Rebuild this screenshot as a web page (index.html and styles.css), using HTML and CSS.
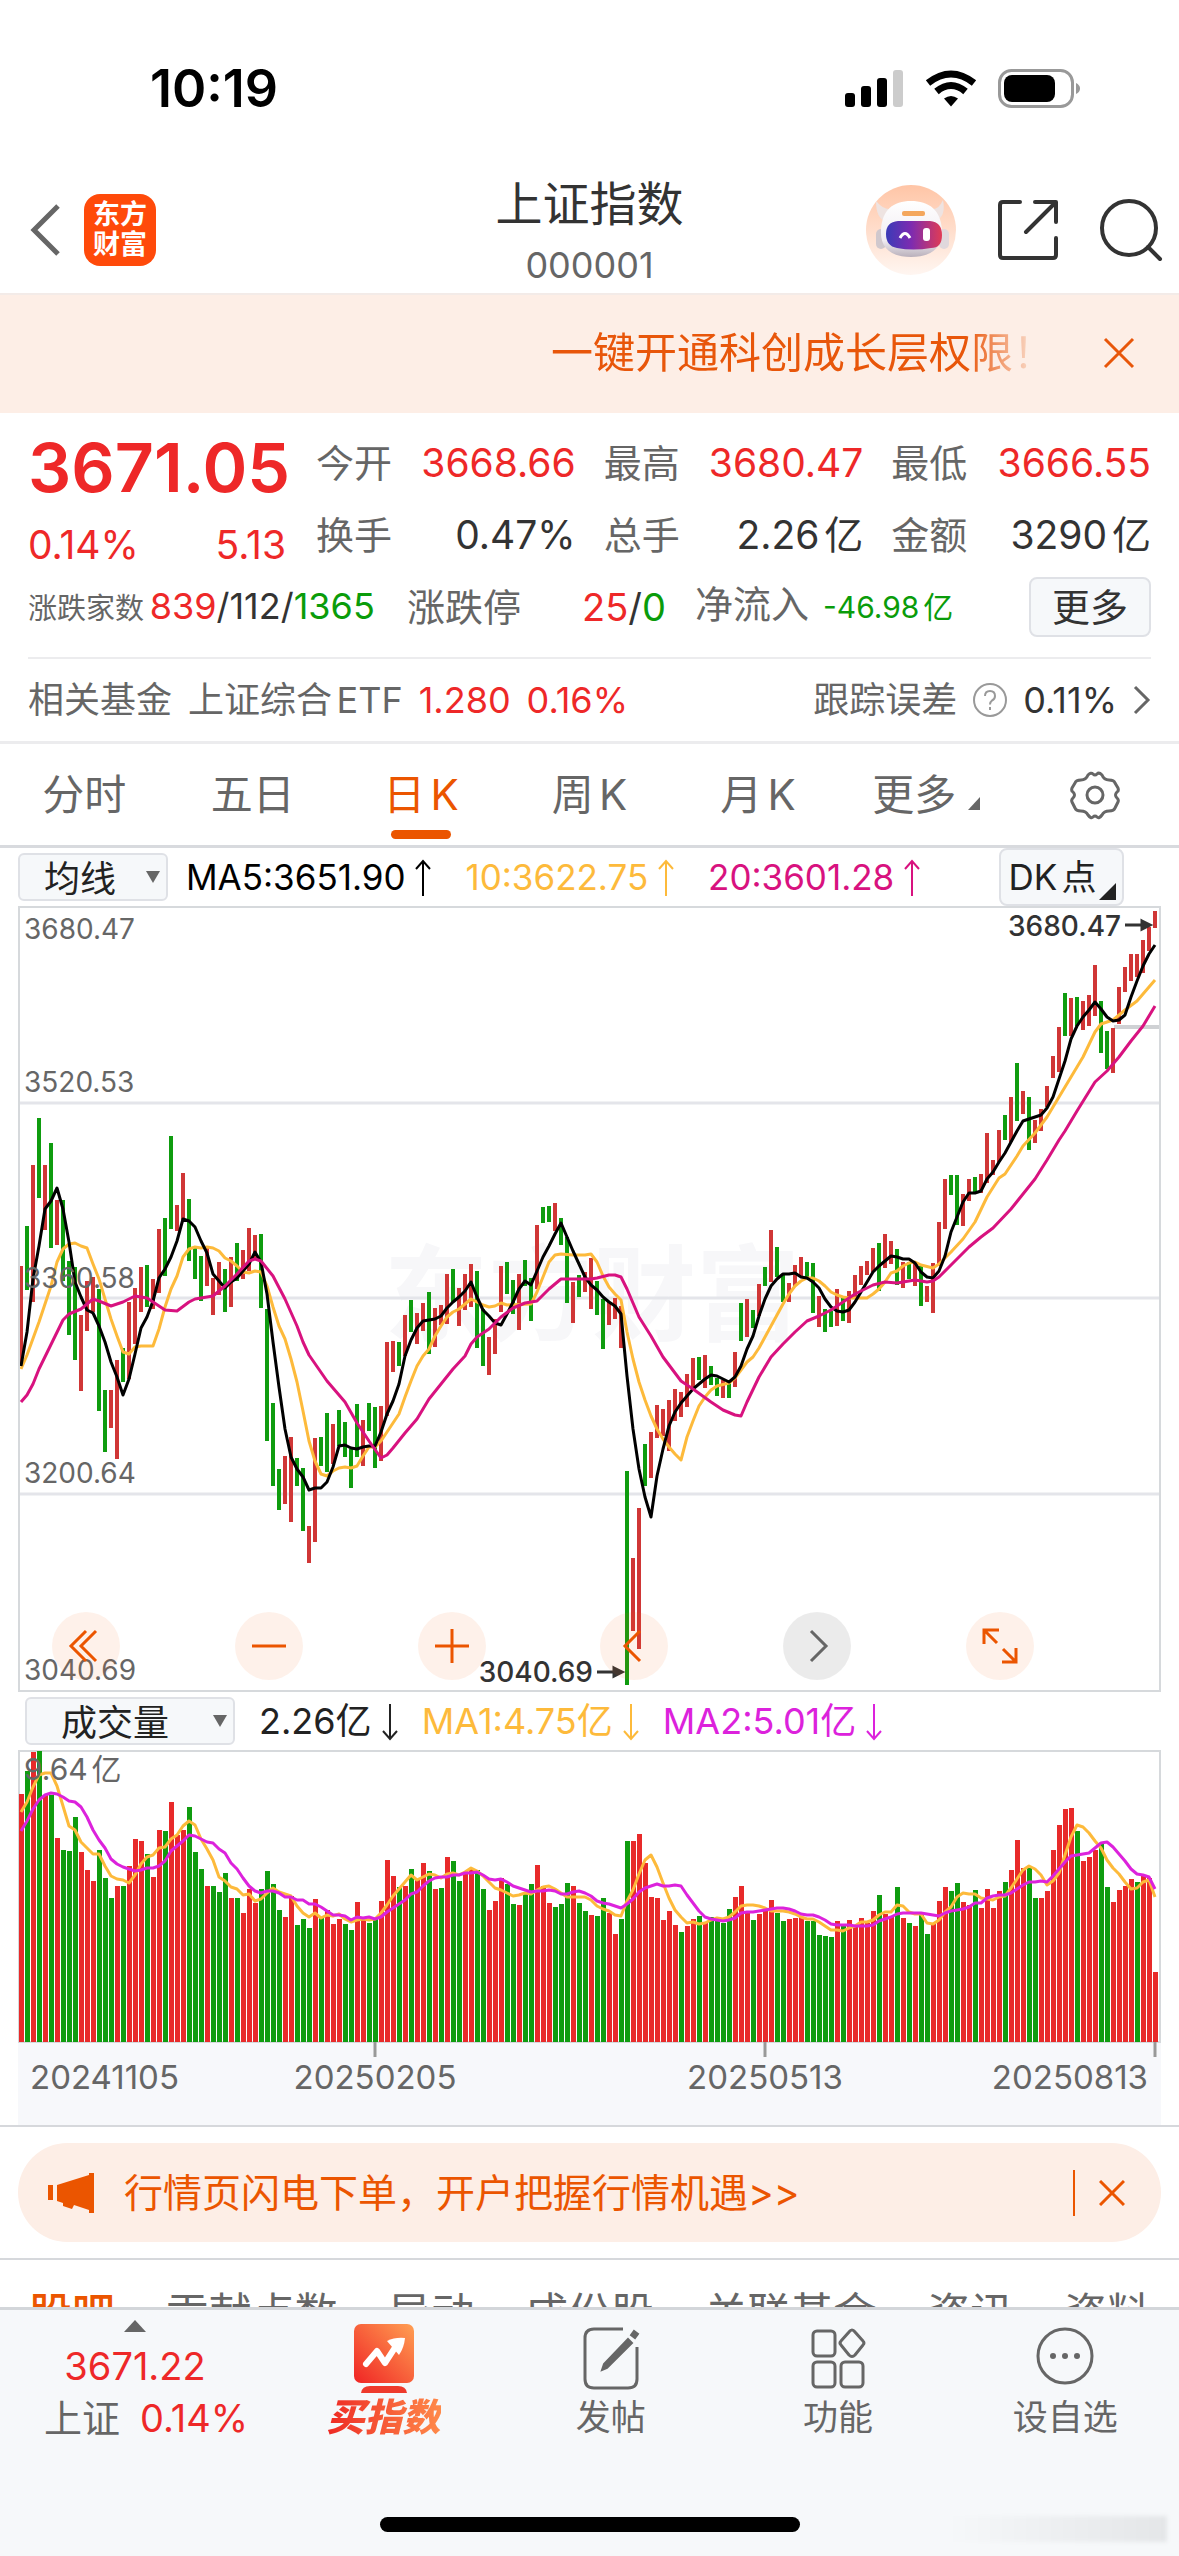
FILE: index.html
```html
<!DOCTYPE html>
<html lang="zh-CN">
<head>
  <meta charset="UTF-8">
  <meta name="viewport" content="width=device-width, initial-scale=1.0">
  <title>上证指数 000001</title>
  <link rel="stylesheet" href="styles.css">
</head>
<body>

  <div class="status-bar">
    <span class="status-time">10:19</span>
    <svg class="status-icons" width="236" height="40" viewBox="0 0 236 40">
      <rect x="0" y="24" width="10" height="14" rx="3"/>
      <rect x="16" y="17" width="10" height="21" rx="3"/>
      <rect x="32" y="9" width="10" height="29" rx="3"/>
      <rect x="48" y="1" width="10" height="37" rx="3" fill="#ccc"/>
      <path d="M106 37.500l-7-8q7-5 14 0z"/>
      <path d="M91.500 22.500q14.500-12 29 0M83 14q23-18 46 0" fill="none" stroke="#000" stroke-width="7"/>
      <rect x="154.500" y="1.500" width="73" height="36" rx="12" fill="none" stroke="#999" stroke-width="3"/>
      <rect x="159" y="6" width="51" height="27" rx="8"/>
      <path d="M231 14q4 2 4 5.500t-4 5.500z" fill="#999"/>
    </svg>
  </div>

  <header class="header">
    <div class="header-left">
      <button class="icon-button" aria-label="返回">
        <svg width="32" height="54" viewBox="0 0 32 54"><path d="M28 3L4 27l24 24" fill="none" stroke="#666" stroke-width="5"/></svg>
      </button>
      <a class="logo" href="#">东方<br>财富</a>
    </div>
    <div class="header-title">
      <h1>上证指数</h1>
      <p>000001</p>
    </div>
    <div class="header-right">
      <button class="icon-button" aria-label="智能助手">
        <svg width="92" height="92" viewBox="0 0 92 92">
          <defs>
            <linearGradient id="robotBg" x1="0" y1="0" x2="0" y2="1"><stop offset="0" stop-color="#ffc5a6"/><stop offset="1" stop-color="#fff6f1"/></linearGradient>
            <linearGradient id="robotHead" x1="0" y1="0" x2="0" y2="1"><stop offset="0" stop-color="#fff"/><stop offset=".7" stop-color="#f1edf2"/><stop offset="1" stop-color="#b9b0bb"/></linearGradient>
            <linearGradient id="robotFace"><stop offset="0" stop-color="#3b3bb8"/><stop offset=".45" stop-color="#7d2bb0"/><stop offset="1" stop-color="#e03c55"/></linearGradient>
          </defs>
          <circle cx="46" cy="46" r="45" fill="url(#robotBg)"/>
          <path d="M11 17q8 9 14 8l-4 12q-10-2-10-20zM78 16q-4 9-10 9l4 11q9-4 6-20z" fill="#eee3e1"/>
          <rect x="11" y="45" width="10" height="20" rx="5" fill="#d0c8cd"/>
          <rect x="74" y="45" width="10" height="20" rx="5" fill="#e0d8dc"/>
          <path d="M46 17c18 0 30 9 31 29 1 18-11 27-31 27S15 64 16 46c1-20 12-29 30-29z" fill="url(#robotHead)"/>
          <rect x="37" y="27" width="23" height="5" rx="2" fill="#f4a75d"/>
          <path d="M33 37h32q12 1 12 14t-11 13q-18 3-34 0Q21 62 21 50t12-13z" fill="url(#robotFace)"/>
          <path d="M35 54q5-9 10 0" fill="none" stroke="#fff" stroke-width="3"/>
          <rect x="58" y="44" width="7" height="13" rx="3" fill="#fff"/>
        </svg>
      </button>
      <button class="icon-button" aria-label="分享">
        <svg width="62" height="62" viewBox="0 0 62 62" fill="none" stroke="#333" stroke-width="4" stroke-linecap="round" stroke-linejoin="round">
          <path d="M23 3H6q-3 0-3 3v50q0 3 3 3h50q3 0 3-3V39M38 3h21v20M58 4L29 33"/>
        </svg>
      </button>
      <button class="icon-button" aria-label="搜索">
        <svg width="64" height="64" viewBox="0 0 64 64" fill="none" stroke="#333" stroke-width="4" stroke-linecap="round">
          <circle cx="30" cy="30" r="27"/><path d="M49 49l12 12"/>
        </svg>
      </button>
    </div>
  </header>

  <div class="notice">
    <p class="notice-text">一键开通科创成长层权限！</p>
    <button class="icon-button" aria-label="关闭">
      <svg width="32" height="32" viewBox="0 0 32 32"><path d="M2 2l28 28M30 2L2 30" stroke="#e8560a" stroke-width="3"/></svg>
    </button>
  </div>

  <main class="main">
    <section class="quote">
      <div class="quote-top">
        <div class="quote-price">
          <strong class="red">3671.05</strong>
          <div class="quote-change red"><span>0.14%</span><span>5.13</span></div>
        </div>
        <dl class="stats">
          <div><dt>今开</dt><dd class="red">3668.66</dd></div>
          <div><dt>最高</dt><dd class="red">3680.47</dd></div>
          <div><dt>最低</dt><dd class="red">3666.55</dd></div>
          <div><dt>换手</dt><dd>0.47%</dd></div>
          <div><dt>总手</dt><dd>2.26亿</dd></div>
          <div><dt>金额</dt><dd>3290亿</dd></div>
        </dl>
      </div>
      <div class="quote-counts">
        <p class="count-rise"><small>涨跌家数</small><span class="red">839</span>/112/<span class="green">1365</span></p>
        <p class="count-limit"><span class="label">涨跌停</span><span><span class="red">25</span>/<span class="green">0</span></span></p>
        <p class="count-flow"><span class="label">净流入</span><span class="flow green">-46.98亿</span></p>
        <button class="more-button">更多</button>
      </div>
      <a class="fund" href="#">
        <span class="label">相关基金</span>
        <span class="label">上证综合ETF</span>
        <span class="red">1.280</span>
        <span class="red">0.16%</span>
        <span class="label fund-error">跟踪误差</span>
        <svg width="34" height="34" viewBox="0 0 34 34" fill="none" stroke="#999" stroke-width="2">
          <circle cx="17" cy="17" r="16"/><path d="M12 13q0-5 5-5t5 5q0 3-3 4.500-2 1.500-2 4M17 24v3"/>
        </svg>
        <span>0.11%</span>
        <svg width="18" height="30" viewBox="0 0 18 30"><path d="M2 2l13 13L2 28" fill="none" stroke="#666" stroke-width="3"/></svg>
      </a>
    </section>

    <nav class="periods">
      <button>分时</button>
      <button>五日</button>
      <button class="active">日K</button>
      <button>周K</button>
      <button>月K</button>
      <button class="period-more">更多</button>
      <button class="icon-button" aria-label="设置">
        <svg width="50" height="50" viewBox="0 0 50 50" fill="none" stroke="#666" stroke-width="3" stroke-linejoin="round">
          <path d="M18 5q3-3 5-1 2 2 4 0 2-2 5 1 2 5 7 5 5 0 6 3l3 5q1 3-1 4-3 3 0 6 2 2 1 4l-3 6q-1 3-6 3-5 0-7 4-3 4-5 2-2-2-4 0-2 2-5-2-2-4-7-4-5 0-6-3l-3-6q-1-2 1-4 3-3 0-6-2-1-1-4l3-5q1-3 6-3 5 0 7-5z"/>
          <circle cx="25" cy="25" r="8"/>
        </svg>
      </button>
    </nav>

    <section class="charts">
      <div class="indicator">
        <label class="select select-ma">
          <select aria-label="主图指标"><option>均线</option><option>BOLL</option></select>
        </label>
        <span class="ma5">MA5:3651.90 <svg viewBox="0 0 16 38"><path d="M8 37V2M1 10l7-8 7 8"/></svg></span>
        <span class="ma10">10:3622.75 <svg viewBox="0 0 16 38"><path d="M8 37V2M1 10l7-8 7 8"/></svg></span>
        <span class="ma20">20:3601.28 <svg viewBox="0 0 16 38"><path d="M8 37V2M1 10l7-8 7 8"/></svg></span>
        <button class="dk-button">DK点</button>
      </div>

      <div class="price-chart">
        <svg id="priceChart" viewBox="0 0 1143 786">
          <text class="watermark" x="366" y="427">东方财富</text>
          <path class="grid" d="M0 197h1143M0 392h1143M0 588h1143"/>
          <path class="gap-line" d="M1096 121h46"/>
          <g id="candles"></g>
          <g class="lines">
            <polyline id="ma10" stroke="#fdba3b"/>
            <polyline id="ma5" stroke="#000"/>
            <polyline id="ma20" stroke="#d8127f"/>
          </g>
          <rect class="frame" x="1" y="1" width="1141" height="784"/>
          <text class="scale" x="6" y="33">3680.47</text>
          <text class="scale" x="6" y="186">3520.53</text>
          <text class="scale" x="6" y="382">3360.58</text>
          <text class="scale" x="6" y="577">3200.64</text>
          <text class="scale" x="6" y="774">3040.69</text>
          <text class="peak" x="1103" y="30" text-anchor="end">3680.47</text>
          <path class="arrow" d="M1107 19h22M1124 15l8 4-8 4z"/>
          <text class="peak" x="575" y="776" text-anchor="end">3040.69</text>
          <path class="arrow" d="M579 766h22M596 762l8 4-8 4z"/>
        </svg>
        <div class="chart-tools">
          <button aria-label="最早"><svg viewBox="0 0 68 68"><path d="M34 19L19 34l15 15M44 19L29 34l15 15"/></svg></button>
          <button aria-label="缩小"><svg viewBox="0 0 68 68"><path d="M17 34h34"/></svg></button>
          <button aria-label="放大"><svg viewBox="0 0 68 68"><path d="M17 34h34M34 17v34"/></svg></button>
          <button aria-label="向前"><svg viewBox="0 0 68 68"><path d="M40 19L25 34l15 15"/></svg></button>
          <button aria-label="向后" disabled><svg viewBox="0 0 68 68"><path d="M28 19l15 15-15 15"/></svg></button>
          <button aria-label="全屏"><svg viewBox="0 0 68 68"><path d="M18 32V18h15M19 19l12 12M50 36v14H36M49 49L37 37"/></svg></button>
        </div>
      </div>

      <div class="indicator indicator-volume">
        <label class="select select-volume">
          <select aria-label="副图指标"><option>成交量</option><option>MACD</option></select>
        </label>
        <span>2.26亿 <svg viewBox="0 0 16 38"><path d="M8 1v35M1 28l7 8 7-8"/></svg></span>
        <span class="ma10">MA1:4.75亿 <svg viewBox="0 0 16 38"><path d="M8 1v35M1 28l7 8 7-8"/></svg></span>
        <span class="vol-ma2">MA2:5.01亿 <svg viewBox="0 0 16 38"><path d="M8 1v35M1 28l7 8 7-8"/></svg></span>
      </div>

      <svg id="volumeChart" viewBox="0 0 1143 375">
        <rect class="axis" y="292" width="1143" height="83"/>
        <rect class="frame" x="1" y="1" width="1141" height="291"/>
        <g id="volumes"></g>
        <g class="lines">
          <polyline id="volMa5" stroke="#fdba3b"/>
          <polyline id="volMa10" stroke="#dc22dc"/>
        </g>
        <text class="scale volume-max" x="6" y="30">9.64亿</text>
        <path class="ticks" d="M357 292v15M747 292v15M1137 292v15"/>
        <text class="date" x="12" y="339">20241105</text>
        <text class="date" x="357" y="339" text-anchor="middle">20250205</text>
        <text class="date" x="747" y="339" text-anchor="middle">20250513</text>
        <text class="date" x="1130" y="339" text-anchor="end">20250813</text>
      </svg>
    </section>

    <div class="promo">
      <svg width="46" height="40" viewBox="0 0 46 40" fill="#eb5500"><path d="M0 12h5v15H0zM9 12L41 2V0h5v40h-5v-3l-15-5-2 4-9-3v-3l-6-2z"/></svg>
      <a href="#">行情页闪电下单，开户把握行情机遇&gt;&gt;</a>
      <button class="icon-button" aria-label="关闭">
        <svg width="26" height="26" viewBox="0 0 26 26"><path d="M1 1l24 24M25 1L1 25" stroke="#eb5500" stroke-width="3"/></svg>
      </button>
    </div>

    <nav class="sections">
      <a class="active" href="#">股吧</a>
      <a href="#">贡献点数</a>
      <a href="#">异动</a>
      <a href="#">成份股</a>
      <a href="#">关联基金</a>
      <a href="#">资讯</a>
      <a href="#">资料</a>
    </nav>
  </main>

  <footer class="bottom">
    <nav class="bottom-nav">
      <a class="bottom-index" href="#">
        <span class="up-mark"></span>
        <span class="red">3671.22</span>
        <span class="index-change">上证<span class="red">0.14%</span></span>
      </a>
      <a class="buy" href="#">
        <svg width="62" height="70" viewBox="0 0 62 70">
          <defs><linearGradient id="buyFill" x1="0" y1="1" x2="1" y2="0"><stop offset="0" stop-color="#f02424"/><stop offset="1" stop-color="#ff9f52"/></linearGradient></defs>
          <rect x="1" width="60" height="59" rx="7" fill="url(#buyFill)"/>
          <path d="M13 40l11-13 8 12 11-17" fill="none" stroke="#fff" stroke-width="6" stroke-linecap="round" stroke-linejoin="round"/>
          <path d="M34 17q8-4 18-3-1 10-6 17z" fill="#fff"/>
          <path d="M8 69q1-7 9-7h28q8 0 9 7z" fill="#ee3a2c"/>
        </svg>
        <span>买指数</span>
      </a>
      <a href="#">
        <svg width="62" height="70" viewBox="0 0 62 70" fill="none" stroke="#666" stroke-width="3">
          <path d="M43 5H14q-9 0-9 9v41q0 9 9 9h34q9 0 9-9V23"/>
          <path d="M48 15l4 4-25 25-5 2 2-6zM51 11l3-4 4 3-3 4z" fill="#666" stroke-width="2"/>
        </svg>
        <span>发帖</span>
      </a>
      <a href="#">
        <svg width="62" height="70" viewBox="0 0 62 70" fill="none" stroke="#666" stroke-width="3">
          <rect x="6" y="7" width="22" height="25" rx="4"/><rect x="6" y="38" width="22" height="25" rx="4"/><rect x="34" y="38" width="22" height="25" rx="4"/>
          <path d="M42 8q3-4 6 0l8 9q2 2 0 4l-8 10q-3 3-6 0l-8-10q-2-2 0-4z"/>
        </svg>
        <span>功能</span>
      </a>
      <a href="#">
        <svg width="62" height="70" viewBox="0 0 62 70">
          <circle cx="31" cy="32" r="27" fill="none" stroke="#666" stroke-width="3"/>
          <g fill="#666"><circle cx="19" cy="32" r="3"/><circle cx="31" cy="32" r="3"/><circle cx="43" cy="32" r="3"/></g>
        </svg>
        <span>设自选</span>
      </a>
    </nav>
    <div class="home-indicator"></div>
    <div class="smudge"></div>
  </footer>

  <script src="chart.js"></script>
</body>
</html>
```
FILE: styles.css
```css
* {
  box-sizing: border-box;
}

body {
  margin: 0;
  height: 100vh;
  display: flex;
  flex-direction: column;
  font-family: Inter, 'Noto Sans CJK SC', sans-serif;
  font-size: 36px;
  line-height: 48px;
  text-autospace: normal;
  color: #333;
  background: #fff;
}

h1, p, dl, dd {
  margin: 0;
}

a {
  color: inherit;
  text-decoration: none;
}

button, select {
  font: inherit;
  color: inherit;
  padding: 0;
  border: 0;
  background: none;
}

svg {
  display: block;
}

.icon-button {
  flex: none;
}

.red {
  color: #ee2828;
}

.green {
  color: #0a9c0a;
}

.label, dt {
  color: #666;
}

/* 状态栏 */
.status-bar {
  flex: none;
  display: flex;
  justify-content: space-between;
  align-items: center;
  height: 178px;
  padding: 0 98px 0 150px;
}

.status-time {
  font-size: 52px;
  font-weight: 600;
  color: #000;
}

/* 顶部标题 */
.header {
  flex: none;
  display: grid;
  grid-template-columns: 1fr auto 1fr;
  align-items: center;
  height: 117px;
  padding: 0 16px 18px 30px;
  border-bottom: 2px solid #f3ebe8;
}

.header-left, .header-right {
  display: flex;
  align-items: center;
  gap: 22px;
}

.header-right {
  justify-content: flex-end;
  gap: 40px;
}

.logo {
  width: 72px;
  height: 72px;
  padding-top: 6px;
  border-radius: 16px;
  background: #ff4a0a;
  color: #fff;
  font-size: 27px;
  font-weight: 700;
  line-height: 30px;
  text-align: center;
}

.header-title {
  margin: -12px 0;
  padding: 6px 14px 0 0;
  text-align: center;
}

.header-title h1 {
  font-size: 47px;
  font-weight: 400;
  line-height: 64px;
}

.header-title p {
  color: #666;
  line-height: 58px;
}

/* 通知条 */
.notice {
  flex: none;
  display: flex;
  justify-content: flex-end;
  align-items: center;
  gap: 46px;
  height: 118px;
  padding: 0 44px 2px 0;
  background: #fdeee6;
}

.notice-text {
  width: 506px;
  font-size: 42px;
  line-height: 60px;
  white-space: nowrap;
  overflow: hidden;
  color: #e8560a;
  -webkit-mask-image: linear-gradient(to right, #000 82%, transparent 97%);
  mask-image: linear-gradient(to right, #000 82%, transparent 97%);
}

.main {
  flex: 1;
  min-height: 0;
  overflow: hidden;
}

/* 行情数据 */
.quote {
  padding: 14px 28px 0;
  border-bottom: 3px solid #ececee;
}

.quote-top {
  display: flex;
  gap: 30px;
}

.quote-price {
  width: 258px;
}

.quote-price strong {
  display: block;
  font-size: 68px;
  font-weight: 600;
  line-height: 80px;
}

.quote-change {
  display: flex;
  justify-content: space-between;
  margin-top: 12px;
  font-size: 39px;
  line-height: 52px;
}

.stats {
  flex: 1;
  display: grid;
  grid-template-columns: repeat(3, 1fr);
  column-gap: 28px;
}

.stats div {
  display: flex;
  justify-content: space-between;
  font-size: 38px;
  line-height: 72px;
}

.stats dd {
  font-size: 39px;
}

.quote-counts {
  display: flex;
  align-items: center;
  height: 72px;
  font-size: 38px;
}

.count-rise {
  width: 379px;
  font-size: 36px;
  white-space: nowrap;
}

.count-rise small {
  font-size: 29px;
  color: #666;
  margin-right: 2px;
}

.count-limit {
  display: flex;
  justify-content: space-between;
  width: 259px;
  margin-right: 29px;
}

.count-flow {
  display: flex;
  gap: 14px;
}

.flow {
  font-size: 30px;
  line-height: 54px;
}

.more-button {
  width: 122px;
  height: 60px;
  margin-left: auto;
  border: 2px solid #dfe1e6;
  border-radius: 8px;
  background: #f6f8fa;
}

.fund {
  display: flex;
  align-items: center;
  gap: 16px;
  height: 84px;
  margin-top: 14px;
  border-top: 2px solid #ececee;
}

.fund-error {
  margin-left: auto;
}

/* 周期切换 */
.periods {
  display: grid;
  grid-template-columns: repeat(7, 1fr);
  align-items: center;
  justify-items: center;
  height: 104px;
  border-bottom: 3px solid #d8dade;
  font-size: 42px;
  color: #666;
}

.periods .active {
  position: relative;
  color: #eb5500;
}

.periods .active::after {
  content: "";
  position: absolute;
  left: 50%;
  bottom: -20px;
  width: 60px;
  height: 9px;
  margin-left: -30px;
  border-radius: 5px;
  background: #eb5500;
}

.period-more::after {
  content: "";
  display: inline-block;
  margin-left: 12px;
  border-left: 12px solid transparent;
  border-bottom: 13px solid #666;
}

/* 图表 */
.charts {
  padding: 0 18px;
}

.indicator {
  display: flex;
  align-items: center;
  gap: 34px;
  height: 58px;
  font-size: 35px;
  color: #222;
  white-space: nowrap;
}

.indicator svg {
  display: inline-block;
  width: 16px;
  height: 38px;
  vertical-align: -7px;
  fill: none;
  stroke: currentColor;
  stroke-width: 2;
}

.select {
  position: relative;
  font-size: 36px;
}

.select select {
  display: block;
  width: 100%;
  height: 48px;
  border: 2px solid #dfe1e6;
  border-radius: 6px;
  background: #f6f8fa;
  appearance: none;
}

.select::after {
  content: "";
  position: absolute;
  right: 8px;
  top: 18px;
  border: 7px solid transparent;
  border-top: 12px solid #666;
  border-bottom: 0;
}

.select-ma {
  width: 150px;
  margin-right: -16px;
}

.select-ma select {
  padding-left: 24px;
}

.select-volume {
  width: 210px;
  margin-left: 7px;
}

.select-volume select {
  padding-left: 34px;
}

.ma5 {
  color: #000;
}

.ma10 {
  color: #fdba3b;
}

.ma20 {
  color: #d8127f;
}

.vol-ma2 {
  color: #dc22dc;
}

.dk-button {
  position: relative;
  width: 125px;
  height: 58px;
  margin-left: auto;
  margin-right: 37px;
  padding-right: 18px;
  border: 2px solid #dfe1e6;
  border-radius: 8px;
  background: #f6f8fa;
}

.dk-button::after {
  content: "";
  position: absolute;
  right: 6px;
  bottom: 4px;
  border-left: 17px solid transparent;
  border-bottom: 17px solid #222;
}

.indicator-volume {
  gap: 24px;
  font-size: 36px;
  text-autospace: no-autospace;
}

.price-chart {
  position: relative;
}

.charts > svg, .price-chart > svg {
  width: 100%;
}

.frame {
  fill: none;
  stroke: #d6d9dc;
  stroke-width: 2;
}

.grid {
  stroke: #e4e5ea;
  stroke-width: 3;
}

.gap-line {
  stroke: #cfd1d4;
  stroke-width: 4;
}

.watermark {
  font-size: 104px;
  font-weight: 700;
  fill: #f7f7f9;
}

.lines {
  fill: none;
  stroke-width: 3;
  stroke-linejoin: round;
}

.candle {
  stroke-width: 4;
}

.candle.up {
  stroke: #d03636;
}

.candle.down {
  stroke: #0f9c0f;
}

.volume.up {
  fill: #e82a2a;
}

.volume.down {
  fill: #0f9c0f;
}

.scale {
  font-size: 28px;
  fill: #666;
}

.volume-max {
  font-size: 30px;
}

.peak {
  font-size: 28px;
  font-weight: 500;
  fill: #333;
}

.arrow {
  fill: #333;
  stroke: #333;
  stroke-width: 3;
}

.axis {
  fill: #f7f8fb;
}

.ticks {
  stroke: #999;
  stroke-width: 3;
}

.date {
  font-size: 33px;
  fill: #666;
}

.chart-tools {
  position: absolute;
  left: 34px;
  right: 127px;
  bottom: 12px;
  display: flex;
  justify-content: space-between;
}

.chart-tools button {
  width: 68px;
  height: 68px;
  border-radius: 50%;
  background: rgba(245, 95, 20, 0.09);
}

.chart-tools button:disabled {
  background: rgba(0, 0, 0, 0.08);
}

.chart-tools path {
  fill: none;
  stroke: #eb5500;
  stroke-width: 3;
}

.chart-tools button:disabled path {
  stroke: #666;
}

/* 开户横幅 */
.charts, .promo {
  position: relative;
}

.promo {
  display: flex;
  align-items: center;
  gap: 30px;
  height: 99px;
  margin: 18px 18px 17px;
  padding: 0 36px 0 30px;
  border-radius: 50px;
  background: #fdeee6;
  color: #eb5500;
  font-size: 39px;
}

.charts::after, .promo::after {
  content: "";
  position: absolute;
  left: 0;
  right: 0;
  bottom: -2px;
  border-bottom: 2px solid #d6d8dc;
}

.promo::after {
  left: -18px;
  right: -18px;
  bottom: -18px;
}

.promo .icon-button {
  margin-left: auto;
  padding: 10px 0 10px 24px;
  border-left: 2px solid #eb5500;
}

.sections {
  display: flex;
  justify-content: space-between;
  padding: 24px 29px 0;
  font-size: 43px;
  line-height: 60px;
  color: #666;
  white-space: nowrap;
}

.sections .active {
  color: #eb5500;
  font-weight: 500;
}

/* 底部导航 */
.bottom {
  flex: none;
  height: 249px;
  border-top: 3px solid #d3d6da;
  background: #f6f8fa;
  position: relative;
}

.bottom-nav {
  display: flex;
  color: #666;
  font-size: 35px;
}

.bottom-nav a {
  flex: 1;
  display: flex;
  flex-direction: column;
  align-items: center;
  padding-top: 14px;
  line-height: 46px;
}

.bottom-nav a.bottom-index {
  flex: 0 0 270px;
  padding-top: 10px;
  font-size: 38px;
  line-height: 52px;
}

.index-change {
  display: flex;
  gap: 20px;
  padding-left: 22px;
}

.up-mark {
  margin-bottom: 8px;
  border: 11px solid transparent;
  border-top: 0;
  border-bottom: 12px solid #666;
}

.buy span {
  font-size: 38px;
  font-weight: 900;
  font-style: italic;
  background: linear-gradient(to right, #ee2a24, #ff8a4a);
  -webkit-background-clip: text;
  background-clip: text;
  color: transparent;
}

.home-indicator {
  position: absolute;
  left: 50%;
  bottom: 24px;
  width: 420px;
  height: 15px;
  margin-left: -210px;
  border-radius: 8px;
  background: #000;
}

.smudge {
  position: absolute;
  right: 12px;
  bottom: 14px;
  width: 220px;
  height: 26px;
  background: linear-gradient(to right, rgba(0, 0, 0, 0), rgba(0, 0, 0, 0.07));
  filter: blur(2px);
}
```
FILE: chart.js
```js
// each candle: colour, high, low (third-pixel rows, 171 = top of the frame)
const candles = `r1250-1550 g1130-1323 r947-1360 g807-1047 r947-1143 g881-1197 r1052-1187 g1053-1295 g1237-1457 g1255-1533
r1398-1625 r1295-1447 r1283-1390 g1320-1687 g1622-1810 r1622-1738 r1532-1830 g1498-1600 r1360-1590 r1317-1485
r1255-1390 g1248-1373 r1289-1380 r1139-1333 g1108-1280 g861-1140 r1068-1147 r972-1120 g1049-1237 g1190-1290
g1220-1357 r1190-1310 r1287-1398 r1240-1337 g1260-1390 r1224-1375 g1183-1297 r1202-1290 r1137-1265 r1158-1230
g1156-1378 g1380-1777 g1663-1910 g1860-1983 r1820-1965 r1763-2018 g1826-1910 g1857-2045 r2030-2143 r1768-2078
g1765-1850 g1693-1868 r1725-1845 g1684-1790 g1718-1825 g1800-1917 g1664-1823 r1713-1852 g1661-1747 g1674-1857
r1671-1835 r1480-1700 r1477-1570 g1480-1550 r1398-1520 g1352-1450 r1392-1485 r1362-1447 g1328-1515 r1378-1493
r1368-1427 r1274-1425 g1260-1360 r1316-1430 r1275-1383 r1245-1373 g1266-1498 g1380-1550 r1465-1577 r1410-1515
r1252-1390 g1238-1335 g1293-1395 r1275-1442 g1233-1310 g1287-1417 r1129-1320 g1073-1122 g1070-1120 r1063-1147
g1108-1187 g1165-1363 r1300-1422 g1279-1345 r1270-1330 r1227-1380 g1295-1398 g1350-1500 r1358-1427 r1347-1410
r1370-1497 g1867-2507 r2127-2345 r1977-2400 g1786-1910 r1750-1888 r1667-1767 r1680-1760 r1653-1807 r1620-1717
r1630-1703 r1574-1675 r1528-1615 g1523-1592 r1519-1616 g1550-1607 g1587-1640 r1592-1648 g1593-1648 r1508-1613
g1362-1477 r1351-1465 g1383-1438 r1305-1400 g1254-1312 r1143-1300 g1193-1285 g1275-1360 r1302-1360 r1249-1312
r1225-1283 g1240-1290 g1243-1391 r1342-1435 g1380-1448 g1385-1433 r1320-1431 g1345-1415 r1325-1423 r1279-1350
r1250-1308 r1237-1278 r1198-1270 g1182-1327 r1156-1258 r1176-1245 g1200-1308 r1240-1318 g1240-1290 r1240-1310
g1250-1370 r1312-1360 r1243-1393 r1120-1250 r991-1140 g978-1037 g978-1127 r1034-1131 r990-1055 g984-1035
r976-1033 r853-1002 r934-977 r843-940 g797-873 r745-880 g642-815 r727-795 g745-902 r812-881
r780-845 r712-775 r622-688 r535-670 g432-560 r448-560 g443-530 r457-543 r438-530 r348-500
g457-613 g547-660 r538-672 r414-525 r353-428 r316-396 r315-385 r273-372 r235-305 r187-237`.split(/\s+/);

// one point for each day
const ma5 = [1552,1450,1290,1190,1080,1055,1018,1080,1180,1300,1345,1382,1392,1432,1480,1540,1585,1637,1590,1515,
1437,1405,1355,1288,1260,1225,1175,1111,1117,1133,1175,1212,1275,1295,1317,1298,1288,1265,1245,1208,
1240,1335,1480,1615,1740,1825,1860,1885,1923,1918,1918,1900,1855,1790,1788,1796,1800,1795,1790,1790,
1750,1695,1655,1605,1520,1472,1438,1415,1412,1410,1400,1377,1360,1345,1325,1300,1345,1382,1400,1423,
1428,1395,1360,1320,1296,1308,1265,1225,1190,1155,1122,1165,1205,1245,1285,1308,1322,1345,1360,1372,
1395,1580,1740,1860,1945,2003,1880,1800,1730,1690,1663,1640,1620,1605,1590,1578,1580,1590,1600,1585,
1550,1500,1460,1400,1350,1312,1290,1276,1276,1273,1284,1288,1298,1318,1350,1375,1387,1390,1383,1358,
1330,1300,1270,1250,1235,1220,1225,1231,1231,1243,1270,1283,1287,1265,1220,1150,1105,1060,1033,1033,
1025,990,970,940,912,878,845,817,809,803,797,778,745,690,635,570,530,505,483,460,
480,505,516,512,498,445,395,350,315,288];

// day:row
const ma10 = `0:1560 1:1518 3:1420 5:1310 6:1240 7:1200 8:1184 9:1181 10:1190 11:1197 12:1245 13:1290 14:1350 15:1410 16:1462 17:1508
18:1515 19:1495 20:1490 22:1490 23:1440 24:1375 25:1320 26:1280 27:1225 28:1199 29:1194 30:1198 31:1195 32:1196 33:1205 34:1226
35:1235 36:1252 37:1268 38:1271 39:1265 40:1268 41:1310 42:1375 43:1430 44:1470 45:1530 46:1600 47:1685 48:1775 49:1835 50:1875
51:1881 52:1865 53:1856 54:1853 55:1858 56:1850 57:1820 58:1793 59:1793 60:1777 61:1750 62:1722 63:1695 64:1645 65:1595 66:1550
67:1522 68:1500 69:1460 70:1430 71:1405 72:1388 73:1380 74:1365 75:1350 76:1358 77:1368 78:1373 79:1372 80:1363 81:1367 85:1365
86:1330 87:1285 88:1240 89:1218 90:1215 92:1218 94:1218 95:1214 96:1240 97:1280 98:1313 99:1335 100:1352 101:1450 102:1530
103:1600 104:1652 105:1700 106:1740 107:1770 108:1795 109:1815 110:1832 111:1765 112:1715 113:1672 114:1645 115:1622 116:1610
118:1602 119:1588 120:1562 121:1540 122:1525 123:1497 124:1465 125:1430 126:1397 127:1365 128:1335 129:1312 130:1297 131:1288
132:1288 133:1296 134:1310 135:1330 136:1338 137:1344 138:1348 141:1348 142:1335 143:1320 144:1298 145:1272 146:1265 147:1250
148:1242 149:1238 150:1247 152:1258 153:1245 155:1208 157:1170 159:1120 161:1045 163:988 164:975 166:920 167:892 169:853
171:805 173:745 175:685 177:625 179:550 180:525 182:512 184:483 186:455 187:436 189:393`;

const ma20 = `0:1660 1:1637 2:1605 3:1560 7:1412 8:1395 10:1380 12:1350 13:1355 15:1370 17:1358 19:1340 21:1346 22:1358 24:1383 26:1385
28:1358 29:1350 32:1341 33:1325 34:1310 36:1275 38:1237 39:1231 40:1236 42:1280 44:1350 46:1430 47:1480 48:1518 51:1595 54:1660
56:1722 58:1775 60:1826 61:1818 62:1798 64:1752 66:1710 68:1650 70:1605 72:1560 74:1520 75:1485 76:1465 78:1440 80:1405 82:1378
84:1362 86:1355 88:1320 90:1290 92:1291 94:1290 95:1291 96:1286 98:1279 99:1278 100:1285 101:1320 103:1403 105:1460 107:1525
110:1595 112:1620 115:1660 117:1683 119:1698 120:1700 121:1660 123:1585 125:1525 127:1485 129:1450 131:1417 133:1400 135:1382
137:1360 139:1335 142:1307 144:1300 146:1301 149:1292 151:1298 152:1296 153:1285 155:1247 156:1230 158:1195 160:1165 162:1137
165:1080 167:1035 169:990 171:932 173:872 174:845 176:785 179:700 181:665 183:625 185:577 187:530 189:472`;

// top row of each volume bar, 1056 = base line
const volumes = `r311 g244 r187 g183 r316 g316 r444 g481 g483 g381 r487 r541 r572 g481 g565 g625 r589 g588 r528 r448
r454 g491 r560 r421 g424 r335 r435 r421 g350 g487 g538 r588 g587 g607 g548 r625 g625 r670 r598 r640
g598 g544 g583 g661 r680 r617 g705 g686 g714 r627 g683 r661 r703 r686 g703 g721 r637 r690 g700 g688
r634 r509 r557 g590 r587 g538 r571 r519 g544 r597 g595 r502 g512 g573 r545 r538 g540 g597 r661 r634
r565 g583 g643 r645 g608 g583 r525 r588 r640 g652 g643 g580 r587 g638 g663 r675 g678 g624 r670 r733
g688 g454 r454 r433 r518 r621 r625 r691 r662 r706 g726 r707 r686 g679 r695 g680 g680 g698 g657 r621
r589 r663 g690 r671 r660 r630 g668 g693 r686 r684 r680 g693 g692 g736 g739 g741 r694 g706 r690 r706
r683 r700 r664 g615 r671 r680 g590 r684 g698 r707 g674 g733 r702 r634 r591 g602 g578 r637 r645 g600
r654 r598 r655 r604 g577 r541 r451 r534 g534 g625 r625 r604 r480 r405 r358 r354 g422 r514 r500 r480
g460 g591 r636 r599 r588 r567 g576 r556 r563 r845`.split(/\s+/);

// the days before the first bar, for the averages
const earlier = [560, 520, 480, 440, 400, 400, 400, 370, 350];

const SVG = "http://www.w3.org/2000/svg";
const dayX = i => 3 + i * 6;
const priceY = v => Math.round(v / 3 - 57);
const volumeY = v => Math.round(v / 3 - 60);

function add(parent, tag, attrs) {
  const el = document.createElementNS(SVG, tag);
  for (const key in attrs) el.setAttribute(key, attrs[key]);
  document.getElementById(parent).appendChild(el);
}

function drawLine(id, points, toY) {
  document.getElementById(id).setAttribute("points", points.map(([i, v]) => dayX(i) + "," + toY(v)).join(" "));
}

function parse(text) {
  return text.split(/\s+/).map(p => p.split(":").map(Number));
}

function average(values, days) {
  const all = earlier.concat(values);
  return values.map((v, i) => {
    const part = all.slice(i + earlier.length + 1 - days, i + earlier.length + 1);
    return [i, part.reduce((a, b) => a + b) / days];
  });
}

candles.forEach((c, i) => {
  const [high, low] = c.slice(1).split("-").map(Number);
  add("candles", "path", {
    class: "candle " + (c[0] === "r" ? "up" : "down"),
    d: `M${dayX(i)} ${priceY(high)}V${priceY(low)}`
  });
});

volumes.forEach((v, i) => {
  const top = volumeY(Number(v.slice(1)));
  add("volumes", "rect", {
    class: "volume " + (v[0] === "r" ? "up" : "down"),
    x: dayX(i) - 2, y: top, width: 5, height: 292 - top
  });
});

drawLine("ma5", ma5.map((v, i) => [i, v]), priceY);
drawLine("ma10", parse(ma10), priceY);
drawLine("ma20", parse(ma20), priceY);

const tops = volumes.map(v => Number(v.slice(1)));
drawLine("volMa5", average(tops, 5), volumeY);
drawLine("volMa10", average(tops, 10), volumeY);
```
